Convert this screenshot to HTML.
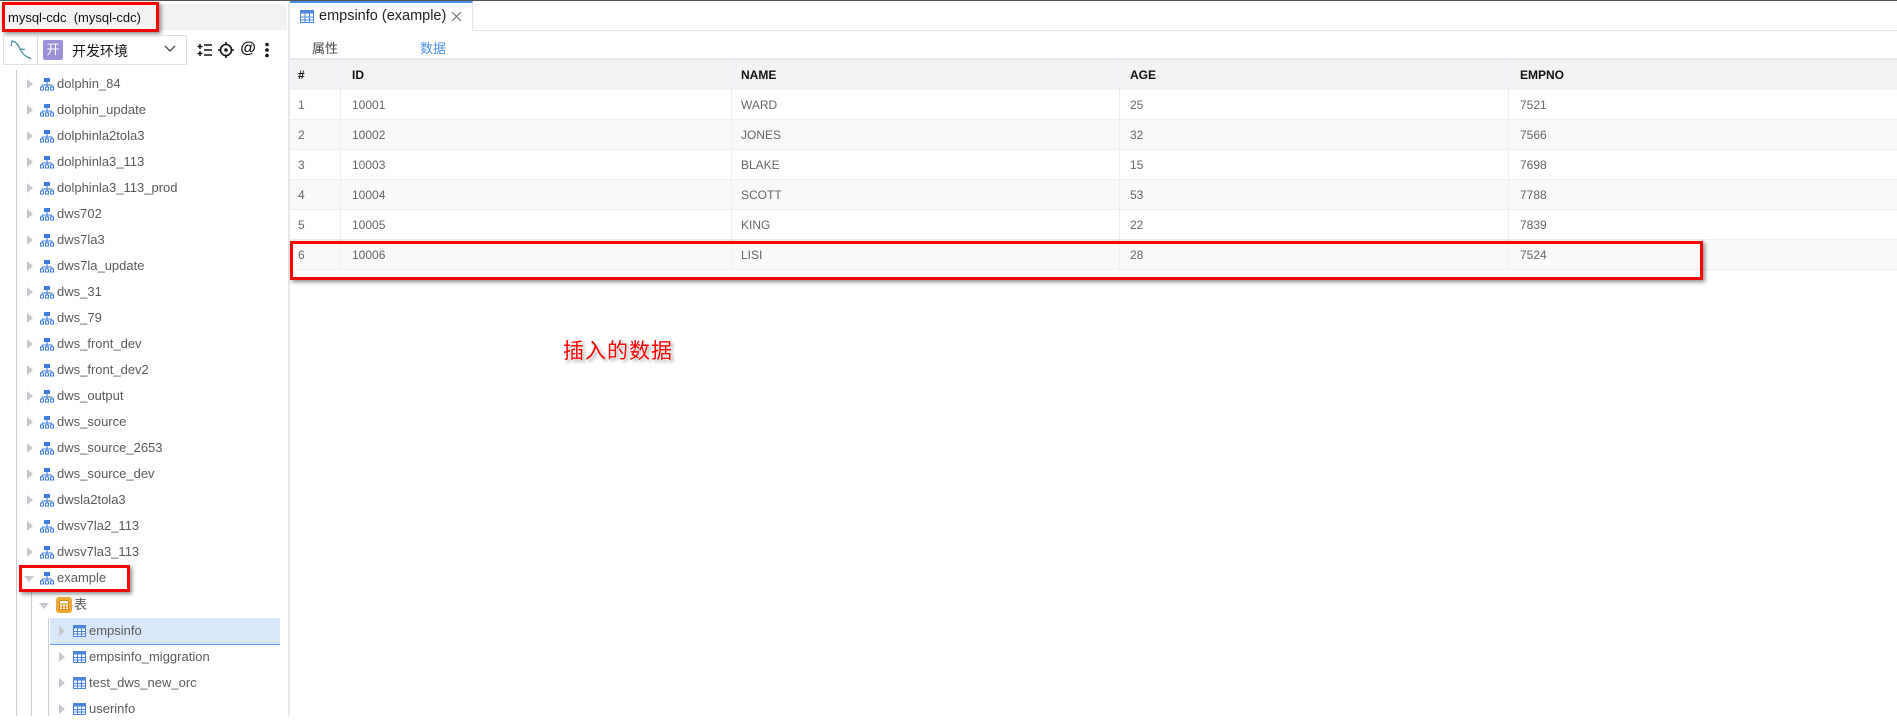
<!DOCTYPE html>
<html><head><meta charset="utf-8"><style>
*{margin:0;padding:0;box-sizing:border-box}
body{width:1897px;height:716px;overflow:hidden;background:#fff;font-family:"Liberation Sans","Noto Sans CJK SC",sans-serif;position:relative;color:#555}
.a{position:absolute}
.redbox{position:absolute;border:3px solid #f00;box-shadow:2px 2px 4px rgba(0,0,0,.45)}
.row{position:absolute;left:0;height:26px;line-height:26px;font-size:13px;color:#5a5a5a;white-space:nowrap}
.tri{position:absolute;width:0;height:0;border-top:5px solid transparent;border-bottom:5px solid transparent;border-left:6px solid #c4c7cc}
.trid{position:absolute;width:0;height:0;border-left:5px solid transparent;border-right:5px solid transparent;border-top:6px solid #c4c7cc}
.th{position:absolute;font-size:12px;font-weight:bold;color:#111}
.td{position:absolute;font-size:12px;color:#666}
</style></head><body>
<div class="a" style="left:0;top:0;width:1897px;height:1px;background:#555"></div>
<!-- sidebar -->
<div class="a" style="left:0;top:4px;width:287px;height:26px;background:#f1f2f4"></div>
<div class="a" style="left:8px;top:10px;font-size:13px;color:#111;white-space:pre">mysql-cdc  (mysql-cdc)</div>
<div class="redbox" style="left:2px;top:2px;width:157px;height:30px"></div>
<div class="a" style="left:288px;top:2px;width:2px;height:714px;background:#e6e8ec"></div>

<div class="a" style="left:3px;top:35px;width:184px;height:30px;border:1px solid #dcdfe6"></div>
<div class="a" style="left:37px;top:35px;width:1px;height:30px;background:#dcdfe6"></div>
<svg class="a" style="left:8px;top:38px" width="26" height="24" viewBox="0 0 26 24"><path d="M3 3c4 0 7 3 9 8 2 4 5 7 9 9M4 4l-1 4M12 11c2 0 3 1 5 0M20 19l3 2" stroke="#3a8a9a" stroke-width="1.2" fill="none"/></svg>
<div class="a" style="left:43px;top:40px;width:20px;height:20px;background:#9c90d8;border-radius:2px;color:#fff;font-size:13px;text-align:center;line-height:20px">开</div>
<div class="a" style="left:72px;top:41px;font-size:14px;color:#111">开发环境</div>
<svg class="a" style="left:164px;top:45px" width="12" height="8"><path d="M1 1l5 5 5-5" stroke="#444" stroke-width="1.3" fill="none"/></svg>
<svg class="a" style="left:197px;top:42px" width="16" height="16"><path d="M3 2v5M0.5 4.5h5M3 9v5M0.5 11.5h5" stroke="#111" stroke-width="1.5"/><path d="M7 3h8M7 8h8M7 13h8" stroke="#111" stroke-width="1.6"/></svg>
<svg class="a" style="left:218px;top:42px" width="16" height="16"><circle cx="8" cy="8" r="5.5" stroke="#111" stroke-width="1.6" fill="none"/><circle cx="8" cy="8" r="1.8" fill="#111"/><path d="M8 0v3M8 13v3M0 8h3M13 8h3" stroke="#111" stroke-width="1.6"/></svg>
<div class="a" style="left:240px;top:40px;font-size:16px;font-style:italic;font-weight:bold;color:#111">@</div>
<svg class="a" style="left:264px;top:42px" width="6" height="16"><circle cx="3" cy="2.5" r="1.8" fill="#111"/><circle cx="3" cy="8" r="1.8" fill="#111"/><circle cx="3" cy="13.5" r="1.8" fill="#111"/></svg>

<div class="a" style="left:16px;top:70px;width:1px;height:646px;background:#c9ccd1"></div>
<div class="a" style="left:31px;top:592px;width:1px;height:124px;background:#c9ccd1"></div>
<div class="a" style="left:48px;top:618px;width:1px;height:98px;background:#c9ccd1"></div>
<div class="a" style="left:50px;top:618px;width:230px;height:27px;background:#d9e7fb;border-bottom:1px solid #5a9cf0"></div>

<div id="tree"></div>
<script>
var names=["dolphin_84","dolphin_update","dolphinla2tola3","dolphinla3_113","dolphinla3_113_prod","dws702","dws7la3","dws7la_update","dws_31","dws_79","dws_front_dev","dws_front_dev2","dws_output","dws_source","dws_source_2653","dws_source_dev","dwsla2tola3","dwsv7la2_113","dwsv7la3_113","example"];
var h="";
var db='<svg class="a" style="left:40px;top:7px" width="14" height="13"><rect x="4" y="0" width="6" height="4" fill="#3c7be0"/><path d="M7 4v3M2 7h10M2 7v2M7 7v2M12 7v2" stroke="#3c7be0" stroke-width="1"/><rect x="0.5" y="9" width="3" height="3" fill="none" stroke="#3c7be0"/><rect x="5.5" y="9" width="3" height="3" fill="none" stroke="#3c7be0"/><rect x="10.5" y="9" width="3" height="3" fill="none" stroke="#3c7be0"/></svg>';
var tb=function(x){return '<svg class="a" style="left:'+x+'px;top:7px" width="13" height="12"><rect x="0.5" y="0.5" width="12" height="11" fill="#fff" stroke="#4a86e0"/><rect x="0.5" y="0.5" width="12" height="3" fill="#4a86e0"/><path d="M0 6.5h13M0 9h13M4.5 3v9M8.5 3v9" stroke="#4a86e0" stroke-width="1"/></svg>';};
for(var i=0;i<names.length;i++){var y=71+26*i;
var t=(i==19)?'<div class="trid" style="left:24px;top:11px"></div>':'<div class="tri" style="left:27px;top:8px"></div>';
h+='<div class="row" style="top:'+y+'px;width:280px">'+t+db+'<span class="a" style="left:57px">'+names[i]+'</span></div>';}
h+='<div class="row" style="top:592px;width:280px"><div class="trid" style="left:39px;top:11px"></div><div class="a" style="left:56px;top:5px;width:16px;height:16px;background:#f0a838;border-radius:3px"></div><svg class="a" style="left:59px;top:8px" width="10" height="10"><rect x="0.5" y="0.5" width="9" height="9" fill="#fff" stroke="#d98a1a"/><path d="M0 4h10M0 7h10M3.5 4v6M6.5 4v6" stroke="#d98a1a"/></svg><span class="a" style="left:74px">表</span></div>';
var tbl=["empsinfo","empsinfo_miggration","test_dws_new_orc","userinfo"];
for(var j=0;j<4;j++){var y=618+26*j;
h+='<div class="row" style="top:'+y+'px;width:280px"><div class="tri" style="left:59px;top:8px"></div>'+tb(73)+'<span class="a" style="left:89px">'+tbl[j]+'</span></div>';}
document.getElementById("tree").innerHTML=h;
</script>
<div class="redbox" style="left:19px;top:565px;width:111px;height:27px"></div>

<!-- right panel -->
<div class="a" style="left:290px;top:30px;width:1607px;height:1px;background:#e4e7ed"></div>
<div class="a" style="left:290px;top:1px;width:183px;height:30px;background:#fff;border-top:2px solid #4a8fe7;border-right:1px solid #e4e7ed"></div>
<svg class="a" style="left:300px;top:10px" width="14" height="13"><rect x="0.5" y="0.5" width="13" height="12" fill="#fff" stroke="#4a86e0"/><rect x="0.5" y="0.5" width="13" height="3" fill="#4a86e0"/><path d="M0 7h14M0 10h14M5 3v10M9.5 3v10" stroke="#4a86e0"/></svg>
<div class="a" style="left:319px;top:8px;font-size:14.5px;color:#222">empsinfo (example)</div>
<svg class="a" style="left:451px;top:11px" width="11" height="11"><path d="M1 1l9 9M10 1l-9 9" stroke="#777" stroke-width="1.2"/></svg>
<div class="a" style="left:312px;top:38px;font-size:13px;color:#444">属性</div>
<div class="a" style="left:420px;top:38px;font-size:13px;color:#4a8fe7">数据</div>
<div class="a" style="left:398px;top:59px;width:68px;height:2px;background:#4a8fe7"></div>
<div class="a" style="left:290px;top:58px;width:1607px;height:2px;background:#e6e8ec"></div>

<div class="a" style="left:290px;top:60px;width:1607px;height:30px;background:#f1f2f4"></div>
<div id="tbl"></div>
<script>
var d=[["1","10001","WARD","25","7521"],["2","10002","JONES","32","7566"],["3","10003","BLAKE","15","7698"],["4","10004","SCOTT","53","7788"],["5","10005","KING","22","7839"],["6","10006","LISI","28","7524"]];
var xs=[298,352,741,1130,1520],bs=[340,731,1119,1508];
var h='';
var hd=["#","ID","NAME","AGE","EMPNO"];
for(var k=0;k<5;k++)h+='<div class="th" style="left:'+xs[k]+'px;top:68px">'+hd[k]+'</div>';
for(var i=0;i<6;i++){var y=90+30*i;
h+='<div class="a" style="left:290px;top:'+y+'px;width:1607px;height:30px;background:'+(i%2?'#f9f9f9':'#fff')+';border-bottom:1px solid #ebeef5"></div>';
for(var k=0;k<5;k++)h+='<div class="td" style="left:'+xs[k]+'px;top:'+(y+8)+'px">'+d[i][k]+'</div>';}
for(var k=0;k<4;k++)h+='<div class="a" style="left:'+bs[k]+'px;top:60px;width:1px;height:210px;background:#ebeef5"></div>';
document.getElementById("tbl").innerHTML=h;
</script>
<div class="redbox" style="left:290px;top:241px;width:1413px;height:39px"></div>
<div class="a" style="left:563px;top:335px;font-size:21px;color:#f00;font-family:'Noto Sans CJK SC',sans-serif;letter-spacing:1px;text-shadow:0 0 2px #fff,0 0 3px #fff,2px 2px 3px rgba(0,0,0,.45)">插入的数据</div>
</body></html>
